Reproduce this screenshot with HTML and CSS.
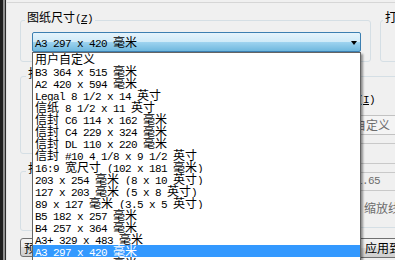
FILE: index.html
```html
<!DOCTYPE html>
<html>
<head>
<meta charset="utf-8">
<link rel="stylesheet" href="styles.css">
</head>
<body>
<div class="win">
  <div class="edge"></div>
  <div class="dlg">
    <div class="row top">
      <fieldset class="grp paper">
        <legend><span class="c">图纸尺寸</span>(<u>Z</u>)</legend>
        <div class="combo">
          <div class="val">A3 297 x 420 <span class="c">毫米</span></div>
          <span class="arrow"></span>
          <div class="list">
            <div class="it"><span class="c">用户自定义</span></div>
            <div class="it">B3 364 x 515 <span class="c">毫米</span></div>
            <div class="it">A2 420 x 594 <span class="c">毫米</span></div>
            <div class="it">Legal 8 1/2 x 14 <span class="c">英寸</span></div>
            <div class="it"><span class="c">信纸</span> 8 1/2 x 11 <span class="c">英寸</span></div>
            <div class="it"><span class="c">信封</span> C6 114 x 162 <span class="c">毫米</span></div>
            <div class="it"><span class="c">信封</span> C4 229 x 324 <span class="c">毫米</span></div>
            <div class="it"><span class="c">信封</span> DL 110 x 220 <span class="c">毫米</span></div>
            <div class="it"><span class="c">信封</span> #10 4 1/8 x 9 1/2 <span class="c">英寸</span></div>
            <div class="it">16:9 <span class="c">宽尺寸</span> (102 x 181 <span class="c">毫米</span>)</div>
            <div class="it">203 x 254 <span class="c">毫米</span> (8 x 10 <span class="c">英寸</span>)</div>
            <div class="it">127 x 203 <span class="c">毫米</span> (5 x 8 <span class="c">英寸</span>)</div>
            <div class="it">89 x 127 <span class="c">毫米</span> (3.5 x 5 <span class="c">英寸</span>)</div>
            <div class="it">B5 182 x 257 <span class="c">毫米</span></div>
            <div class="it">B4 257 x 364 <span class="c">毫米</span></div>
            <div class="it">A3+ 329 x 483 <span class="c">毫米</span></div>
            <div class="it sel">A3 297 x 420 <span class="c">毫米</span></div>
            <div class="it">A5 148 x 210 <span class="c">毫米</span></div>
          </div>
        </div>
      </fieldset>
      <fieldset class="grp copies">
        <legend><span class="c">打印份数</span>(<u>B</u>)</legend>
      </fieldset>
    </div>
    <div class="row mid">
      <div class="lcol">
        <fieldset class="grp area"><legend><span class="c">打印区域</span></legend></fieldset>
        <fieldset class="grp offset"><legend><span class="c">打印偏移</span></legend></fieldset>
        <button class="btn preview"><span class="c">预览</span>(<u>P</u>)...</button>
      </div>
      <div class="rcol">
        <fieldset class="grp scale">
          <legend><span class="c">打印比例</span></legend>
          <div class="opt fit"><span class="box"></span><span class="lbl"><span class="c">布满图纸</span>(<u>I</u>)</span></div>
          <div class="sbox"><span class="c">自定义</span></div>
          <div class="field f1">1</div>
          <div class="field f2">1.65</div>
          <div class="opt lw off"><span class="box"></span><span class="lbl"><span class="c">缩放线宽</span>(L)</span></div>
        </fieldset>
        <button class="btn apply"><span class="c">应用到布局</span>(<u>U</u>)</button>
      </div>
    </div>
  </div>
</div>
</body>
</html>
```

FILE: styles.css
```css
html, body {
  margin: 0;
  padding: 0;
}
body {
  width: 395px;
  height: 260px;
  overflow: hidden;
  background: #f0f0f0;
  font-family: "Liberation Mono", "Noto Sans CJK SC", monospace;
  font-size: 11px;
  letter-spacing: -0.6px;
  color: #000;
}
.c {
  font-family: "Noto Sans CJK SC", sans-serif;
  font-size: 12px;
  letter-spacing: 0;
}
u {
  text-decoration: underline;
}
.win {
  display: flex;
  height: 260px;
}
.edge {
  width: 7px;
  flex-shrink: 0;
  background: linear-gradient(to right, #1e1e1e 0 3px, #8e8e8e 3px 5px, #2a2a2a 5px 6px, #e4e4e4 6px 7px);
}
.dlg {
  flex: 1;
  min-width: 0;
  margin-top: 2px;
  border-top: 1px solid #d6d6d6;
  padding: 7px 0 0 13px;
}
.row {
  display: flex;
}
.grp {
  margin: 0;
  min-width: 0;
  box-sizing: border-box;
  border: 1px solid #d5dfe5;
  border-radius: 3px;
  flex-shrink: 0;
}
.grp legend {
  padding: 0 2px 6px 2px;
  line-height: 14px;
  height: 14px;
  white-space: nowrap;
}
.top {
  gap: 9px;
}
.paper {
  width: 351px;
  padding: 2px 9px 7px 11px;
}
.paper legend {
  margin-left: -7px;
}
.copies {
  width: 80px;
  height: 52px;
  padding: 0 6px;
}
.copies legend {
  margin-left: -4px;
}
.combo {
  position: relative;
  height: 20px;
  box-sizing: border-box;
  border: 1px solid #3c7fb1;
  border-radius: 2px;
  background: linear-gradient(#e5f4fc, #cfeaf8 50%, #9fd4f0 50%, #6fb8de);
}
.val {
  padding-left: 2px;
  line-height: 18px;
  height: 18px;
  white-space: pre;
}
.arrow {
  position: absolute;
  right: 3px;
  top: 8px;
  width: 0;
  height: 0;
  border-left: 3.5px solid transparent;
  border-right: 3.5px solid transparent;
  border-top: 4px solid #000;
}
.list {
  position: absolute;
  left: -1px;
  right: -1px;
  top: calc(100% + 1px);
  background: #fff;
  border: 1px solid #646464;
  box-shadow: 2px 2px 2px rgba(0, 0, 0, 0.4);
  z-index: 5;
}
.it {
  height: 12px;
  line-height: 12px;
  padding-left: 2px;
  white-space: pre;
  overflow: hidden;
}
.it.sel {
  background: #3399ff;
  color: #fff;
}
.mid {
  margin-top: 4px;
}
.lcol {
  width: 181px;
  flex-shrink: 0;
  display: flex;
  flex-direction: column;
}
.area {
  height: 88px;
  padding: 0 10px;
}
.area legend, .offset legend {
  margin-left: -5px;
}
.offset {
  margin-top: 7px;
  height: 70px;
  padding: 0 10px;
}
.btn {
  box-sizing: border-box;
  margin: 0;
  border: 1px solid #707070;
  border-radius: 3px;
  background: linear-gradient(#f2f2f2, #ebebeb 50%, #dddddd 50%, #cfcfcf);
  font-family: "Liberation Mono", "Noto Sans CJK SC", monospace;
  font-size: 11px;
  letter-spacing: -0.6px;
  color: #000;
  text-align: left;
  white-space: nowrap;
}
.preview {
  margin-top: 7px;
  width: 80px;
  height: 19px;
  padding: 0 0 0 3px;
  line-height: 17px;
}
.rcol {
  margin-left: 12px;
  width: 190px;
  flex-shrink: 0;
  display: flex;
  flex-direction: column;
}
.scale {
  width: 190px;
  height: 162px;
  padding: 0 10px;
}
.scale legend {
  margin-left: -5px;
}
.opt {
  display: flex;
  align-items: center;
  gap: 4px;
  height: 14px;
  line-height: 14px;
  white-space: nowrap;
}
.box {
  width: 11px;
  height: 11px;
  border: 1px solid #8f8f8f;
  background: #fff;
  flex-shrink: 0;
}
.fit {
  margin-top: 6px;
  margin-left: 68px;
}
.lw {
  margin-top: 11px;
  margin-left: 123px;
}
.off {
  color: #6d6d6d;
}
.sbox {
  margin-top: 9px;
  margin-left: 127px;
  width: 80px;
  height: 20px;
  box-sizing: border-box;
  border: 1px solid #c2c2c2;
  background: #f4f4f4;
  color: #6d6d6d;
  padding-left: 2px;
  line-height: 18px;
}
.field {
  box-sizing: border-box;
  border: 1px solid #c9c9c9;
  background: #f0f0f0;
  color: #6d6d6d;
  white-space: pre;
}
.f1 {
  margin-top: 8px;
  margin-left: 76px;
  width: 120px;
  height: 21px;
  line-height: 19px;
  padding-left: 3px;
}
.f2 {
  margin-top: 8px;
  margin-left: 128px;
  width: 80px;
  height: 19px;
  line-height: 17px;
  padding-left: 3px;
}
.apply {
  margin-top: 10px;
  margin-left: 117px;
  width: 110px;
  height: 20px;
  padding: 0 0 0 34px;
  line-height: 18px;
}
```
